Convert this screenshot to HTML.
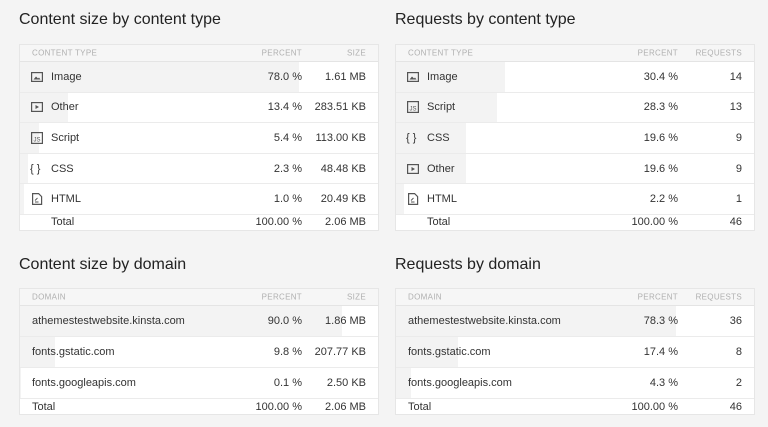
<!DOCTYPE html>
<html><head><meta charset="utf-8"><style>
*{margin:0;padding:0;box-sizing:border-box}
body{width:768px;height:427px;background:#f4f4f4;font-family:"Liberation Sans",sans-serif;color:#333;position:relative;overflow:hidden}
h2{position:absolute;font-weight:normal;font-size:16px;color:#222}
.t{position:absolute;width:360px;background:#fff;border:1px solid #e6e6e6}
.hd{height:17px;background:#f6f6f6;border-bottom:1px solid #e4e4e4;font-size:8px;color:#b0b0b0;letter-spacing:.3px;position:relative}
.r{height:30.6px;border-bottom:1px solid #ebebeb;position:relative;font-size:11px}
.r.s{height:31px}
.tot{height:15px;position:relative;font-size:11px}
.bar{position:absolute;left:0;top:0;bottom:0;background:#f3f3f3}
.c{position:absolute;top:50%;transform:translateY(-50%);white-space:nowrap}
.l1{left:31px}.l2{left:12px}
.p{right:76px;text-align:right}.v{right:12px;text-align:right}
.ic{position:absolute;left:11px;top:50%;transform:translateY(-50%);width:12px;height:12px}
</style></head><body>

<h2 style="left:19px;top:11px">Content size by content type</h2>
<h2 style="left:395px;top:11px">Requests by content type</h2>
<h2 style="left:19px;top:256px">Content size by domain</h2>
<h2 style="left:395px;top:256px">Requests by domain</h2>

<div class="t" style="left:19px;top:44px">
 <div class="hd"><span class="c l2">CONTENT TYPE</span><span class="c p">PERCENT</span><span class="c v">SIZE</span></div>
 <div class="r"><div class="bar" style="width:78%"></div>
  <svg class="ic" viewBox="0 0 12 12"><rect x=".6" y="1.6" width="10.8" height="8.8" fill="none" stroke="#555" stroke-width="1.2"/><path d="M2.5 8.5l2.5-3 2 2 1-1 1.5 2z" fill="#555"/></svg>
  <span class="c l1">Image</span><span class="c p">78.0 %</span><span class="c v">1.61 MB</span></div>
 <div class="r"><div class="bar" style="width:13.4%"></div>
  <svg class="ic" viewBox="0 0 12 12"><rect x=".6" y="1.6" width="10.8" height="8.8" fill="none" stroke="#555" stroke-width="1.2"/><path d="M4.5 4v4l3.5-2z" fill="#555"/></svg>
  <span class="c l1">Other</span><span class="c p">13.4 %</span><span class="c v">283.51 KB</span></div>
 <div class="r"><div class="bar" style="width:5.4%"></div>
  <svg class="ic" viewBox="0 0 12 12"><rect x=".6" y=".6" width="10.8" height="10.8" fill="none" stroke="#555" stroke-width="1.2"/><text x="6" y="9.5" font-size="6" text-anchor="middle" fill="#555" font-family="Liberation Sans">JS</text></svg>
  <span class="c l1">Script</span><span class="c p">5.4 %</span><span class="c v">113.00 KB</span></div>
 <div class="r"><div class="bar" style="width:2.3%"></div>
  <span class="c l2" style="left:10px">{ }</span>
  <span class="c l1">CSS</span><span class="c p">2.3 %</span><span class="c v">48.48 KB</span></div>
 <div class="r"><div class="bar" style="width:1%"></div>
  <svg class="ic" viewBox="0 0 12 12"><path d="M1.6.6h6l3 3v7.8h-9z" fill="none" stroke="#555" stroke-width="1.2"/><path d="M4 7.5l2.5-2.5M4 9h3.5" stroke="#555" stroke-width=".9"/></svg>
  <span class="c l1">HTML</span><span class="c p">1.0 %</span><span class="c v">20.49 KB</span></div>
 <div class="tot"><span class="c l1">Total</span><span class="c p">100.00 %</span><span class="c v">2.06 MB</span></div>
</div>

<div class="t" style="left:395px;top:44px">
 <div class="hd"><span class="c l2">CONTENT TYPE</span><span class="c p">PERCENT</span><span class="c v">REQUESTS</span></div>
 <div class="r"><div class="bar" style="width:30.4%"></div>
  <svg class="ic" viewBox="0 0 12 12"><rect x=".6" y="1.6" width="10.8" height="8.8" fill="none" stroke="#555" stroke-width="1.2"/><path d="M2.5 8.5l2.5-3 2 2 1-1 1.5 2z" fill="#555"/></svg>
  <span class="c l1">Image</span><span class="c p">30.4 %</span><span class="c v">14</span></div>
 <div class="r"><div class="bar" style="width:28.3%"></div>
  <svg class="ic" viewBox="0 0 12 12"><rect x=".6" y=".6" width="10.8" height="10.8" fill="none" stroke="#555" stroke-width="1.2"/><text x="6" y="9.5" font-size="6" text-anchor="middle" fill="#555" font-family="Liberation Sans">JS</text></svg>
  <span class="c l1">Script</span><span class="c p">28.3 %</span><span class="c v">13</span></div>
 <div class="r"><div class="bar" style="width:19.6%"></div>
  <span class="c l2" style="left:10px">{ }</span>
  <span class="c l1">CSS</span><span class="c p">19.6 %</span><span class="c v">9</span></div>
 <div class="r"><div class="bar" style="width:19.6%"></div>
  <svg class="ic" viewBox="0 0 12 12"><rect x=".6" y="1.6" width="10.8" height="8.8" fill="none" stroke="#555" stroke-width="1.2"/><path d="M4.5 4v4l3.5-2z" fill="#555"/></svg>
  <span class="c l1">Other</span><span class="c p">19.6 %</span><span class="c v">9</span></div>
 <div class="r"><div class="bar" style="width:2.2%"></div>
  <svg class="ic" viewBox="0 0 12 12"><path d="M1.6.6h6l3 3v7.8h-9z" fill="none" stroke="#555" stroke-width="1.2"/><path d="M4 7.5l2.5-2.5M4 9h3.5" stroke="#555" stroke-width=".9"/></svg>
  <span class="c l1">HTML</span><span class="c p">2.2 %</span><span class="c v">1</span></div>
 <div class="tot"><span class="c l1">Total</span><span class="c p">100.00 %</span><span class="c v">46</span></div>
</div>

<div class="t" style="left:19px;top:288px">
 <div class="hd"><span class="c l2">DOMAIN</span><span class="c p">PERCENT</span><span class="c v">SIZE</span></div>
 <div class="r s"><div class="bar" style="width:90%"></div><span class="c l2">athemestestwebsite.kinsta.com</span><span class="c p">90.0 %</span><span class="c v">1.86 MB</span></div>
 <div class="r s"><div class="bar" style="width:9.8%"></div><span class="c l2">fonts.gstatic.com</span><span class="c p">9.8 %</span><span class="c v">207.77 KB</span></div>
 <div class="r s"><div class="bar" style="width:0.1%"></div><span class="c l2">fonts.googleapis.com</span><span class="c p">0.1 %</span><span class="c v">2.50 KB</span></div>
 <div class="tot"><span class="c l2">Total</span><span class="c p">100.00 %</span><span class="c v">2.06 MB</span></div>
</div>

<div class="t" style="left:395px;top:288px">
 <div class="hd"><span class="c l2">DOMAIN</span><span class="c p">PERCENT</span><span class="c v">REQUESTS</span></div>
 <div class="r s"><div class="bar" style="width:78.3%"></div><span class="c l2">athemestestwebsite.kinsta.com</span><span class="c p">78.3 %</span><span class="c v">36</span></div>
 <div class="r s"><div class="bar" style="width:17.4%"></div><span class="c l2">fonts.gstatic.com</span><span class="c p">17.4 %</span><span class="c v">8</span></div>
 <div class="r s"><div class="bar" style="width:4.3%"></div><span class="c l2">fonts.googleapis.com</span><span class="c p">4.3 %</span><span class="c v">2</span></div>
 <div class="tot"><span class="c l2">Total</span><span class="c p">100.00 %</span><span class="c v">46</span></div>
</div>
</body></html>
